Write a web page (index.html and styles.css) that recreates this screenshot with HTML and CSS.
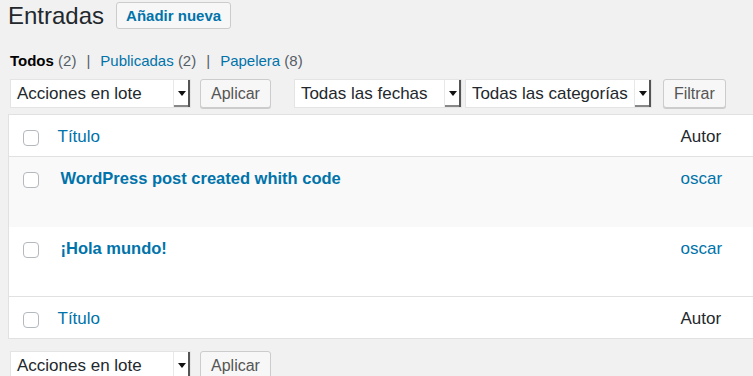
FILE: index.html
```html
<!DOCTYPE html>
<html lang="es">
<head>
    <meta charset="UTF-8">
    <meta name="viewport" content="width=device-width, initial-scale=1.0">
    <title>Entradas</title>
    <link rel="stylesheet" href="styles.css">
</head>
<body>
    <div class="wrap">
        <div class="page-head">
            <h1>Entradas</h1>
            <a class="add-new" href="#">Añadir nueva</a>
        </div>

        <ul class="subsubsub">
            <li><a class="current" href="#">Todos</a> <span class="count">(2)</span></li>
            <li class="sep">|</li>
            <li><a href="#">Publicadas</a> <span class="count">(2)</span></li>
            <li class="sep">|</li>
            <li><a href="#">Papelera</a> <span class="count">(8)</span></li>
        </ul>

        <div class="tablenav">
            <div class="select sel-bulk"><span>Acciones en lote</span><i class="arrow"></i></div>
            <button class="btn">Aplicar</button>
            <div class="select sel-date"><span>Todas las fechas</span><i class="arrow"></i></div>
            <div class="select sel-cat"><span>Todas las categorías</span><i class="arrow"></i></div>
            <button class="btn btn-filter">Filtrar</button>
        </div>

        <table class="posts">
            <thead>
                <tr>
                    <td class="cb"><span class="check"></span></td>
                    <th class="col-title"><a href="#">Título</a></th>
                    <th class="col-author">Autor</th>
                </tr>
            </thead>
            <tbody>
                <tr class="alt">
                    <td class="cb"><span class="check"></span></td>
                    <td class="col-title"><a class="row-title" href="#">WordPress post created whith code</a></td>
                    <td class="col-author"><a href="#">oscar</a></td>
                </tr>
                <tr>
                    <td class="cb"><span class="check"></span></td>
                    <td class="col-title"><a class="row-title" href="#">¡Hola mundo!</a></td>
                    <td class="col-author"><a href="#">oscar</a></td>
                </tr>
            </tbody>
            <tfoot>
                <tr>
                    <td class="cb"><span class="check"></span></td>
                    <th class="col-title"><a href="#">Título</a></th>
                    <th class="col-author">Autor</th>
                </tr>
            </tfoot>
        </table>

        <div class="tablenav bottom">
            <div class="select sel-bulk"><span>Acciones en lote</span><i class="arrow"></i></div>
            <button class="btn">Aplicar</button>
        </div>
    </div>
</body>
</html>
```

FILE: styles.css
```css
* {
    margin: 0;
    padding: 0;
    box-sizing: border-box;
}

body {
    font-family: "Liberation Sans", Arial, sans-serif;
    background-color: #f1f1f1;
    color: #23282d;
    overflow: hidden;
}

a {
    color: #0073aa;
    text-decoration: none;
}

.wrap {
    padding-left: 8px;
}

.page-head {
    display: flex;
    align-items: center;
    gap: 12px;
    height: 31px;
}

h1 {
    font-size: 24px;
    font-weight: 400;
    color: #23282d;
}

.add-new {
    display: block;
    height: 27px;
    line-height: 25px;
    padding: 0 9px;
    border: 1px solid #ccc;
    border-radius: 3px;
    background: #f7f7f7;
    font-size: 15px;
    font-weight: 600;
}

/* status links */
.subsubsub {
    list-style: none;
    display: flex;
    gap: 10px;
    margin: 20px 0 0 2px;
    font-size: 15px;
    line-height: 20px;
}

.subsubsub .current {
    color: #000;
    font-weight: 600;
}

.subsubsub .count,
.subsubsub .sep {
    color: #555d66;
}

.tablenav {
    display: flex;
    align-items: center;
    gap: 9px;
    margin: 7px 0 0 2px;
    height: 31px;
}

.select {
    display: flex;
    align-items: center;
    justify-content: space-between;
    height: 29px;
    background: #fff;
    border: 1px solid #e4e4e4;
    font-size: 17px;
    color: #23282d;
    padding-left: 6px;
}

.sel-bulk { width: 181px; }
.sel-date { width: 168px; margin-left: 14px; }
.sel-cat { width: 187px; margin-left: -6px; }

.arrow {
    position: relative;
    flex: none;
    width: 17px;
    height: 100%;
    border-left: 1px solid #e8e8e8;
    border-right: 2px solid #555;
    box-shadow: inset 0 -2px 0 #888;
}

.arrow::after {
    content: "";
    position: absolute;
    left: 4px;
    top: 11px;
    border-left: 4px solid transparent;
    border-right: 4px solid transparent;
    border-top: 5px solid #111;
}

.btn {
    height: 29px;
    padding: 0 10px;
    font-family: inherit;
    font-size: 16px;
    color: #555;
    background: #f7f7f7;
    border: 1px solid #ccc;
    border-radius: 3px;
    box-shadow: 0 1px 0 #ccc;
}

.btn-filter {
    margin-left: 2px;
}

/* table */
.posts {
    margin-top: 5px;
    width: 820px;
    border-collapse: collapse;
    background: #fff;
    border: 1px solid #e1e1e1;
    font-size: 17px;
}

.posts th {
    font-weight: 400;
    text-align: left;
}

.posts td,
.posts th {
    vertical-align: top;
}

.posts thead tr,
.posts tfoot tr {
    height: 42px;
}

.posts thead th,
.posts thead td {
    padding-top: 12px;
    border-bottom: 1px solid #e1e1e1;
}

.posts tfoot th,
.posts tfoot td {
    padding-top: 12px;
    border-top: 1px solid #e1e1e1;
}

.posts tbody tr {
    height: 70px;
}

.posts tbody td {
    padding-top: 12px;
}

.posts tbody tr.alt {
    background: #f9f9f9;
}

.cb {
    width: 40px;
    padding-left: 14px;
}

.check {
    display: block;
    width: 16px;
    height: 16px;
    margin-top: 3px;
    border: 1px solid #b4b9be;
    border-radius: 4px;
    background: #fff;
}

.col-title {
    padding-left: 9px;
}

.row-title {
    display: inline-block;
    margin-left: 3px;
    font-size: 16.5px;
    font-weight: 700;
}

.col-author {
    width: 157px;
    padding-left: 10px;
    color: #23282d;
}

.tablenav.bottom {
    margin-top: 11px;
}
```
